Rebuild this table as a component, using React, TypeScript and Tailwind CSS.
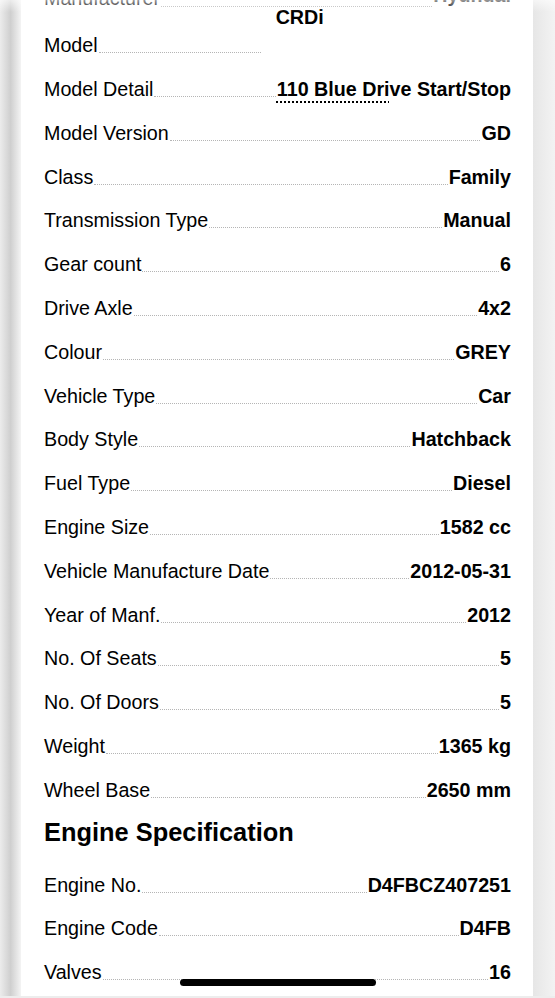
import React from "react";

type Row = { label: string; value: React.ReactNode };

const rowsA: Row[] = [
  { label: "Model Version", value: "GD" },
  { label: "Class", value: "Family" },
  { label: "Transmission Type", value: "Manual" },
  { label: "Gear count", value: "6" },
  { label: "Drive Axle", value: "4x2" },
  { label: "Colour", value: "GREY" },
  { label: "Vehicle Type", value: "Car" },
  { label: "Body Style", value: "Hatchback" },
  { label: "Fuel Type", value: "Diesel" },
  { label: "Engine Size", value: "1582 cc" },
  { label: "Vehicle Manufacture Date", value: "2012-05-31" },
  { label: "Year of Manf.", value: "2012" },
  { label: "No. Of Seats", value: "5" },
  { label: "No. Of Doors", value: "5" },
  { label: "Weight", value: "1365 kg" },
  { label: "Wheel Base", value: "2650 mm" },
];

const rowsB: Row[] = [
  { label: "Engine No.", value: "D4FBCZ407251" },
  { label: "Engine Code", value: "D4FB" },
  { label: "Valves", value: "16" },
];

function Leader() {
  return <div className="flex-1 mx-[1px] mb-[3px] border-b border-dotted border-[#b5b5b5]" />;
}

function SpecRow({ label, value }: Row) {
  return (
    <div className="flex items-end h-[43.8px] leading-[22px]">
      <span className="whitespace-nowrap text-black">{label}</span>
      <Leader />
      <span className="whitespace-nowrap font-bold text-black">{value}</span>
    </div>
  );
}

export default function App() {
  return (
    <div
      className="relative w-[555px] h-[998px] overflow-hidden flex bg-[#ededed] text-[19.7px]"
      style={{ fontFamily: '"Liberation Sans", Arial, Helvetica, sans-serif' }}
    >
      <div className="w-[21px] h-[996px] bg-gradient-to-r from-[#ececec] via-[#cfcfcf] to-[#f4f4f4]" />
      <div className="w-[512px] h-[996px] bg-white pl-[23px] pr-[22px]">
        <div className="-mt-[31.4px]">
          <div className="flex items-end h-[43.8px] leading-[22px]">
            <span className="whitespace-nowrap text-black mb-[3px]">Manufacturer</span>
            <div className="flex-1 mx-[1px] mb-[5px] border-b border-dotted border-[#b5b5b5]" />
            <span className="whitespace-nowrap font-bold text-black mb-[6px]">Hyundai</span>
          </div>
          <div className="flex items-end h-[43.8px] leading-[22px]">
            <span className="whitespace-nowrap text-black">Model</span>
            <div className="w-[162px] mx-[1px] mb-[3px] border-b border-dotted border-[#b5b5b5]" />
            <div className="flex-1 pl-[14px] mb-[28px] font-bold text-black whitespace-nowrap">CRDi</div>
          </div>
          <div className="flex items-end h-[43.8px] leading-[22px]">
            <span className="whitespace-nowrap text-black">Model Detail</span>
            <Leader />
            <span className="whitespace-nowrap font-bold text-black">
              <span className="underline decoration-dotted decoration-[1.5px] underline-offset-[5px]">110 Blue Dri</span>
              ve Start/Stop
            </span>
          </div>
          {rowsA.map((r) => (
            <SpecRow key={r.label} {...r} />
          ))}
          <div className="h-[42px] flex items-end">
            <h2 className="text-[25.4px] font-bold leading-[30px] mb-[-4px] text-black">Engine Specification</h2>
          </div>
          <div className="h-[9px]" />
          {rowsB.map((r) => (
            <SpecRow key={r.label} {...r} />
          ))}
        </div>
      </div>
      <div className="w-[22px] h-[996px] bg-gradient-to-r from-[#e6e6e6] to-[#f3f3f3]" />
      <div className="pointer-events-none absolute left-0 right-0 top-0 h-[12px] bg-gradient-to-b from-white/60 to-white/0" />
      <div className="absolute left-[180px] top-[979px] w-[196px] h-[7px] rounded-full bg-black" />
    </div>
  );
}
